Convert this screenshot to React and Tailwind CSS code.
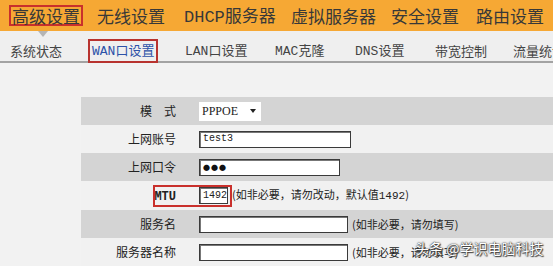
const CJK = '"Noto Sans CJK SC", "Noto Sans", sans-serif'
const MONO = '"Liberation Mono", "Noto Sans CJK SC", monospace'

function Mono({ children }) {
  return <span style={{ fontFamily: MONO }}>{children}</span>
}

const TOP = [
  { w: 'w-[87px]', label: '高级设置', boxed: true },
  { w: 'w-[87px]', label: '无线设置' },
  { w: 'w-[107px]', label: <><Mono>DHCP</Mono>服务器</> },
  { w: 'w-[100px]', label: '虚拟服务器' },
  { w: 'w-[85px]', label: '安全设置' },
  { w: 'w-[80px]', label: '路由设置' },
]

const SUB = [
  { w: 'w-[78px]', label: '系统状态' },
  { w: 'w-[97px]', label: <><Mono>WAN</Mono>口设置</>, active: true },
  { w: 'w-[90px]', label: <><Mono>LAN</Mono>口设置</> },
  { w: 'w-[80px]', label: <><Mono>MAC</Mono>克隆</> },
  { w: 'w-[80px]', label: <><Mono>DNS</Mono>设置</> },
  { w: 'w-[78px]', label: '带宽控制' },
  { w: 'w-[80px]', label: '流量统计' },
]

function Row({ dark, label, h = 'h-[28px]', children }) {
  return (
    <div className={`flex items-center ${h} ${dark ? 'bg-[#d4d4d4]' : 'bg-[#f1f1f1]'}`}>
      <div className="w-[110px] shrink-0 pr-[15px] text-right text-[12px] text-[#222]">{label}</div>
      <div className="flex items-center pl-[8px]">{children}</div>
    </div>
  )
}

function TextBox({ w, value, dots }) {
  return (
    <div
      className={`flex h-[17px] items-center border border-[#3a3a3a] bg-white pl-[3px] ${w}`}
      style={{ boxShadow: 'inset 1px 1px 0 #777' }}
    >
      {dots ? (
        <span className="text-[7px] leading-none tracking-[1px] text-[#111]">●●●</span>
      ) : (
        <span className="text-[10px] leading-none text-[#222]" style={{ fontFamily: MONO }}>
          {value}
        </span>
      )}
    </div>
  )
}

function Hint({ children }) {
  return <span className="ml-[4px] whitespace-nowrap text-[11px] text-[#222]">{children}</span>
}

export default function App() {
  return (
    <div className="relative h-[266px] w-[553px] overflow-hidden bg-[#f2f2f2]" style={{ fontFamily: CJK }}>
      <div className="flex h-[31px] items-center bg-[#f6a834] pl-[9px] text-[17px] leading-[17px] text-[#383838]">
        {TOP.map((t, i) => (
          <div key={i} className={`${t.w} shrink-0 whitespace-nowrap`}>
            {t.boxed ? (
              <span className="inline-block border-2 border-[#c9302c] px-[1px] py-[0px]">{t.label}</span>
            ) : (
              <span className="inline-block pl-[1px]">{t.label}</span>
            )}
          </div>
        ))}
      </div>
      <div className="relative flex h-[32px] items-center border-b-2 border-[#a3a3a3] bg-[#efefef] pl-[10px] pt-[10px] text-[13px] leading-[16px] text-[#444]">
        <div className="absolute left-[38px] top-0 h-0 w-0 border-x-[5px] border-t-[6px] border-x-transparent border-t-[#b5b5b5]" />
        {SUB.map((s, i) => (
          <div key={i} className={`${s.w} shrink-0 whitespace-nowrap`}>
            {s.active ? (
              <span className="inline-block border-2 border-[#b8332f] px-[2px] py-[1px] text-[#2d52a8]">{s.label}</span>
            ) : (
              s.label
            )}
          </div>
        ))}
      </div>

      <div className="ml-[81px] mt-[34px]">
        <Row dark label={<span className="tracking-[12px] -mr-[12px]">模式</span>}>
          <div className="flex h-[19px] w-[62px] items-center justify-between bg-white pl-[3px] pr-[5px]">
            <span className="text-[12px] text-[#222]" style={{ fontFamily: '"Liberation Serif", serif' }}>PPPOE</span>
            <span className="h-0 w-0 border-x-[3px] border-t-[4px] border-x-transparent border-t-[#222]" />
          </div>
        </Row>
        <Row label="上网账号">
          <TextBox w="w-[152px]" value="test3" />
        </Row>
        <Row dark label="上网口令">
          <TextBox w="w-[141px]" dots />
        </Row>
        <Row h="h-[29px]" label={<span className="pl-[3px] font-semibold" style={{ fontFamily: MONO }}>MTU</span>}>
          <TextBox w="w-[29px]" value="1492" />
          <Hint>
            (如非必要，请勿改动，默认值<Mono>1492</Mono>)
          </Hint>
        </Row>
        <Row dark label="服务名">
          <TextBox w="w-[149px]" />
          <Hint>(如非必要，请勿填写)</Hint>
        </Row>
        <Row label="服务器名称">
          <TextBox w="w-[149px]" />
          <Hint>(如非必要，请勿填写)</Hint>
        </Row>
      </div>

      <div className="absolute left-[153px] top-[185px] h-[22px] w-[79px] border-2 border-[#c9302c]" />
      <div
        className="absolute left-[415px] top-[238px] whitespace-nowrap text-[14px] leading-[20px] text-white"
        style={{ textShadow: '0 0 1px #333, 0 0 2px #333, 1px 1px 1px #444' }}
      >
        头条 @学识电脑科技
      </div>
    </div>
  )
}
